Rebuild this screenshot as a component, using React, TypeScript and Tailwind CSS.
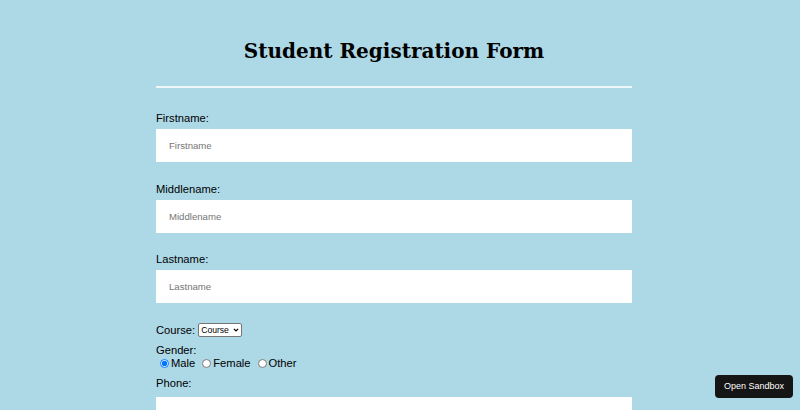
import { useState } from 'react'

const fields = ['Firstname', 'Middlename', 'Lastname']

export default function App() {
  const [gender, setGender] = useState('male')

  return (
    <div className="min-h-[410px] bg-[#add8e6] pt-[38px] text-black" style={{ fontFamily: "'Liberation Sans', Arial, sans-serif" }}>
      <div className="ml-[156px] w-[476px]">
        <h1
          className="text-center text-[20px] font-bold leading-[26px]"
          style={{ fontFamily: "'DejaVu Serif', 'Liberation Serif', serif" }}
        >
          Student Registration Form
        </h1>
        <hr className="mt-[22px] border-t-2 border-[#eef6f9]" />

        <form className="mt-[22px] flex flex-col text-[11.2px]">
          {fields.map((f) => (
            <div key={f} className="mb-[18.5px]">
              <label className="block leading-[16px]">{f}:</label>
              <input
                placeholder={f}
                className="mt-[3px] block h-[33px] w-full bg-white px-[13px] text-[9.6px] placeholder:text-[#757575] focus:outline-none"
              />
            </div>
          ))}

          <div className="flex items-center gap-[3px] leading-[16px]">
            <span>Course:</span>
            <div className="relative">
              <select className="block h-[14px] w-[44px] appearance-none rounded-[2px] border border-[#767676] bg-white pl-[2px] pr-[10px] text-[8.6px] leading-[12px]">
                <option>Course</option>
              </select>
              <svg viewBox="0 0 10 10" className="pointer-events-none absolute right-[3px] top-[4px] h-[6px] w-[6px]">
                <path d="M1.5 3 L5 6.5 L8.5 3" fill="none" stroke="#000" strokeWidth="2" />
              </svg>
            </div>
          </div>

          <div className="mt-[6px] leading-[13px]">
            <div>Gender:</div>
            <div className="flex items-center">
              {['Male', 'Female', 'Other'].map((g) => (
                <label key={g} className="mr-[3px] flex items-center">
                  <input
                    type="radio"
                    name="gender"
                    checked={gender === g.toLowerCase()}
                    onChange={() => setGender(g.toLowerCase())}
                    className="m-0 ml-[4px] mr-[2px] h-[9px] w-[9px]"
                  />
                  {g}
                </label>
              ))}
            </div>
          </div>

          <div className="mt-[7.5px] leading-[13px]">Phone:</div>
          <input className="mt-[7px] block h-[33px] w-full bg-white" />
        </form>
      </div>

      <button className="fixed bottom-[12px] right-[7px] rounded-[4px] bg-[#151515] px-[9px] py-[6px] text-[9px] leading-[11px] text-white">
        Open Sandbox
      </button>
    </div>
  )
}
